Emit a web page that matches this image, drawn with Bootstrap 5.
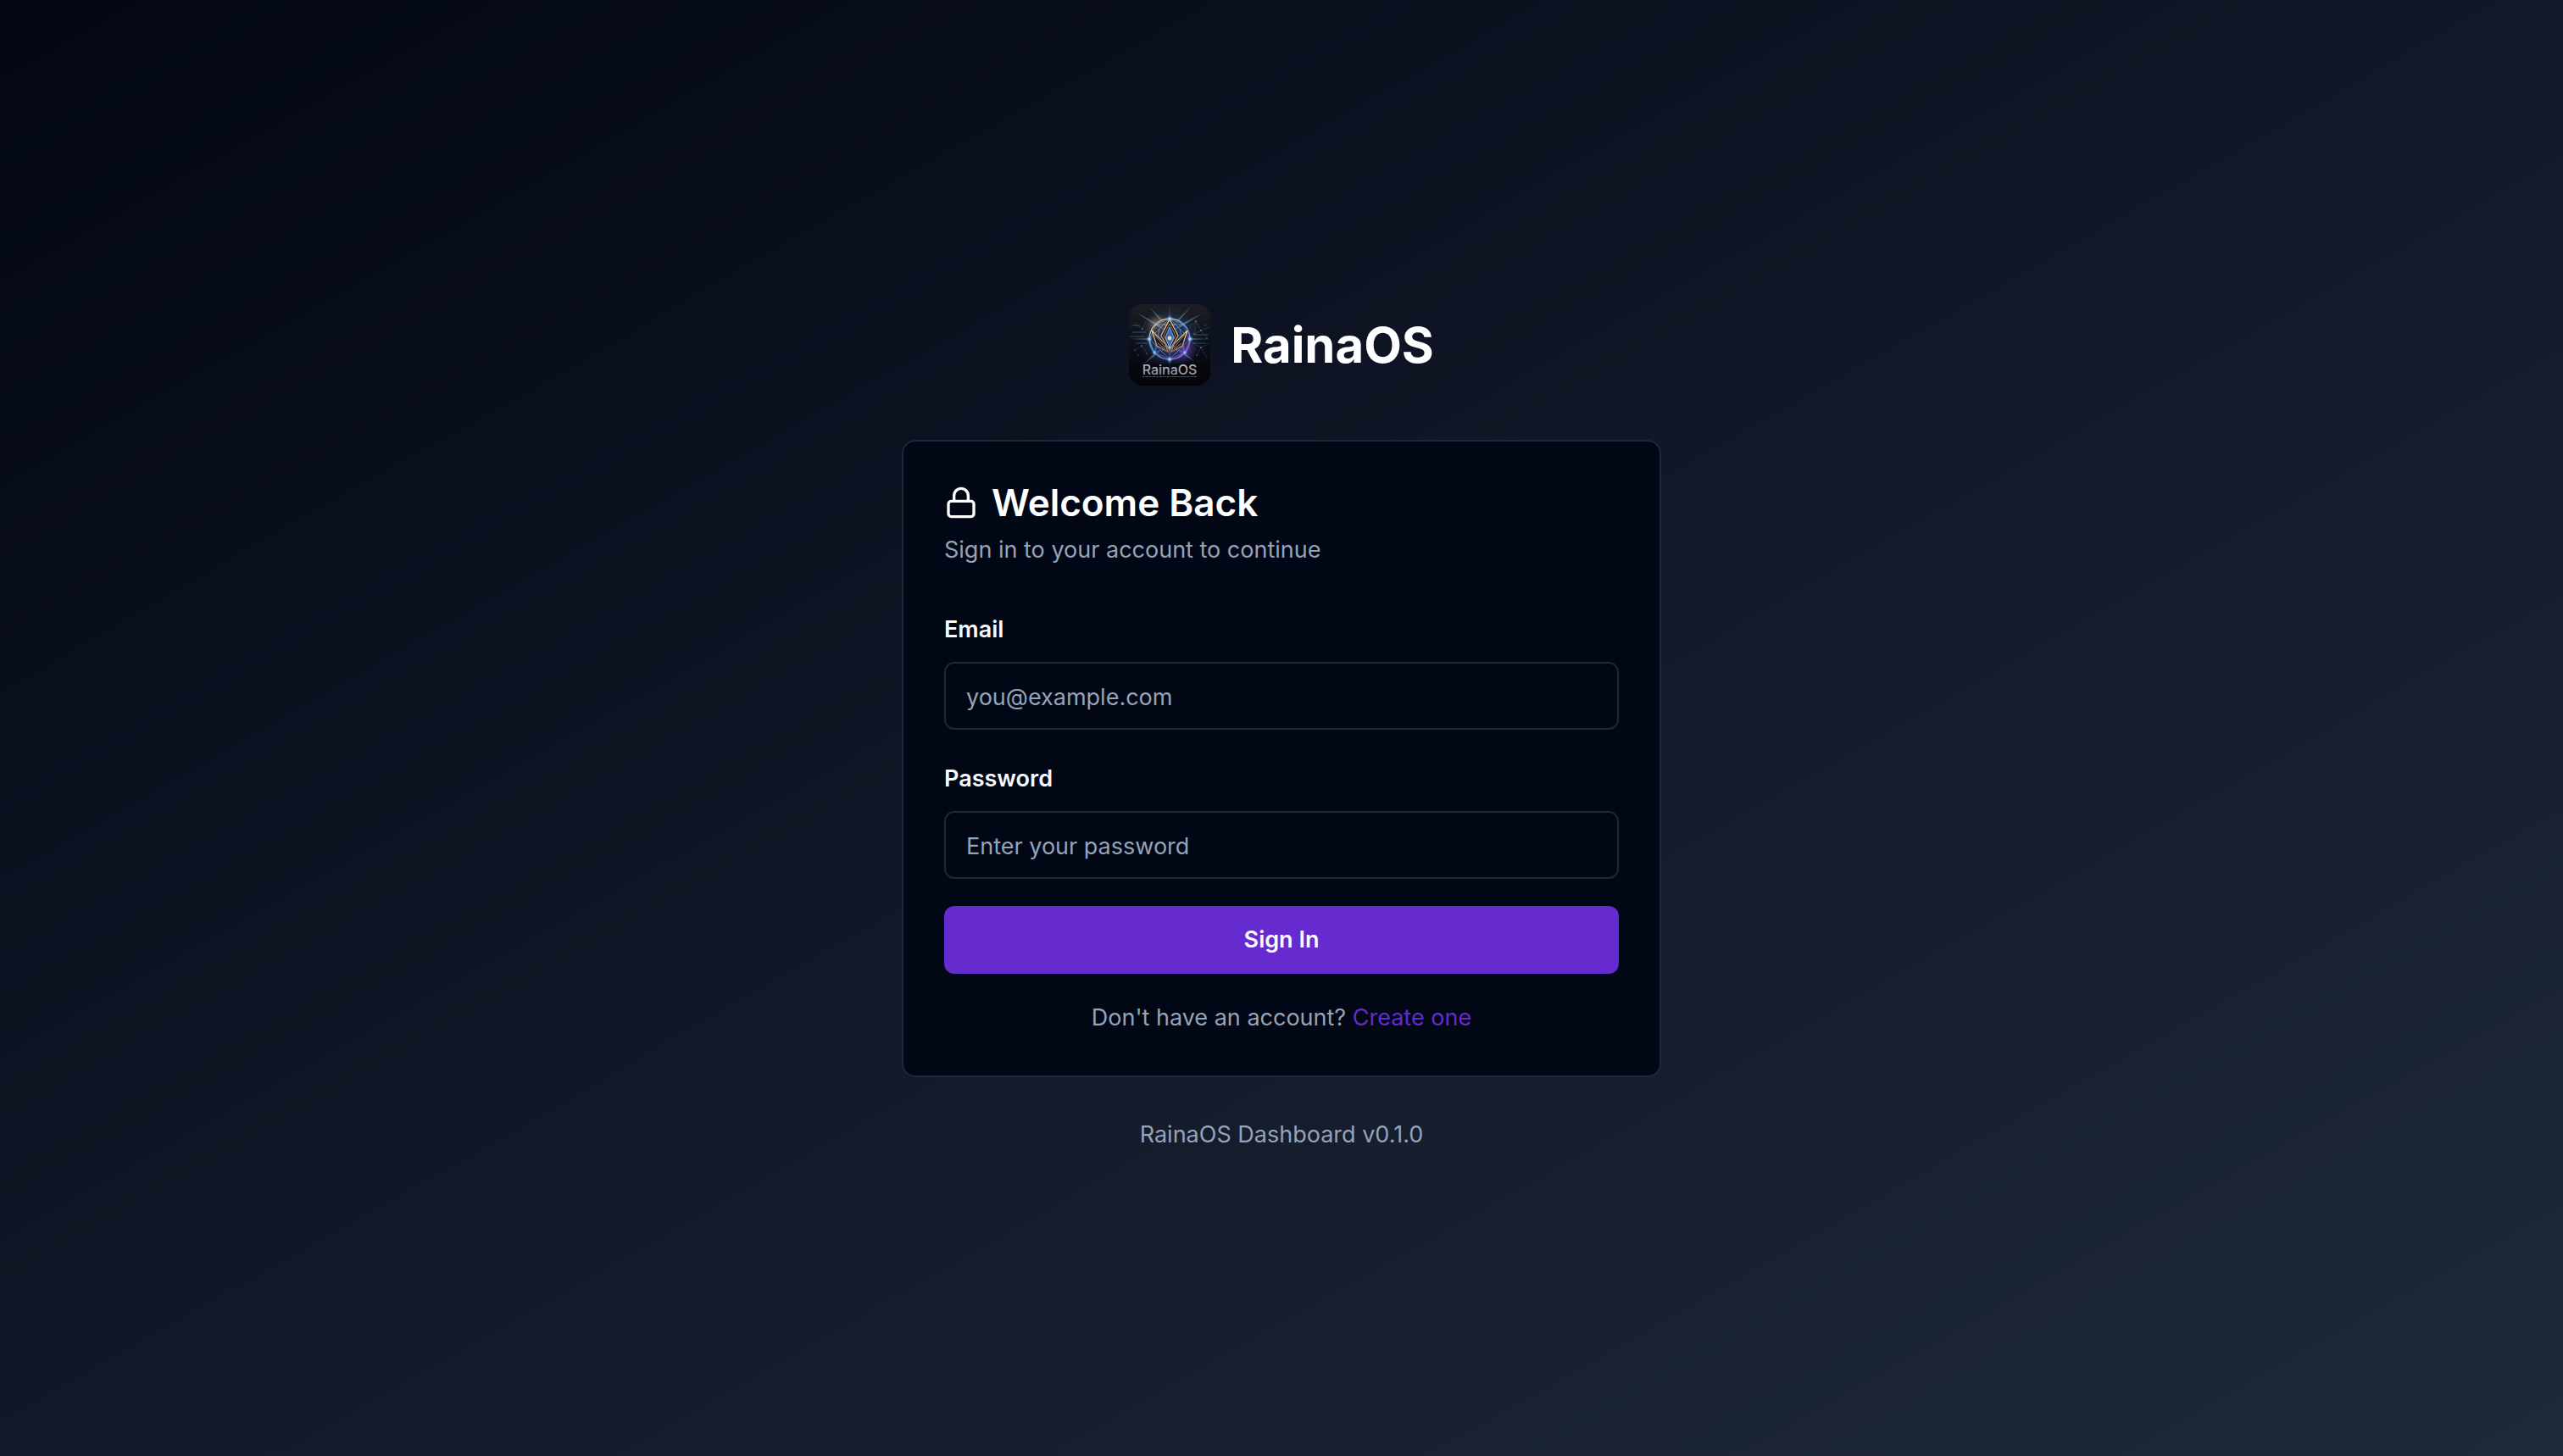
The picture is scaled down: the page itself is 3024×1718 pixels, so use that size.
<!DOCTYPE html>
<html lang="en" data-bs-theme="dark">
<head>
<meta charset="utf-8">
<meta name="viewport" content="width=device-width, initial-scale=1">
<title>RainaOS</title>
<link href="https://cdn.jsdelivr.net/npm/bootstrap@5.3.0/dist/css/bootstrap.min.css" rel="stylesheet">
<style>
  :root { --surface: #010714; --line: #1f2738; --ink: #f9fafc; --muted: #96a3b8; --brand: #652bcf; }
  body { font-family: Inter, "Liberation Sans", sans-serif; font-size: 27px; line-height: 40px; color: var(--ink);
    background: linear-gradient(to bottom right, #020615, #121827 50%, #1f293a) no-repeat; }
  .auth-column { width: 100%; max-width: 896px; }
  .brand-row { gap: 24px; margin-bottom: 64px; }
  .brand-logo { width: 96px; height: 96px; border-radius: 16px; }
  .brand-name { font-size: 58px; line-height: 72px; font-weight: 700; }
  .auth-card { --bs-card-bg: var(--surface); --bs-card-border-color: var(--line); --bs-card-color: var(--ink);
    border-width: 2px; border-radius: 16px; }
  .auth-card .card-body { padding: 48px; }
  .auth-head { margin-bottom: 48px; }
  .auth-title { gap: 16px; font-size: 44px; line-height: 48px; font-weight: 600; margin-bottom: 12px; }
  .auth-form { gap: 32px; }
  .form-label { font-size: 27px; line-height: 52px; font-weight: 600; margin-bottom: 12px; display: block; }
  .form-control { height: 80px; padding: 2px 24px 0; font-size: 27px; line-height: 40px; border: 2px solid var(--line);
    border-radius: 12px; background: var(--surface); color: var(--ink); }
  .form-control:focus { background: var(--surface); border-color: var(--brand); box-shadow: none; }
  .form-control::placeholder { color: var(--muted); opacity: 1; }
  .btn-brand { --bs-btn-bg: var(--brand); --bs-btn-color: var(--ink); --bs-btn-hover-bg: #5824b8; --bs-btn-hover-color: #fff;
    height: 80px; border: 0; border-radius: 12px; font-size: 27px; font-weight: 600; }
  .text-dim { color: var(--muted); }
  .link-brand { color: var(--brand); }
  .version { margin-top: 48px; }
</style>
<script src="https://cdn.jsdelivr.net/npm/bootstrap@5.3.0/dist/js/bootstrap.bundle.min.js"></script>
</head>
<body>
<main class="min-vh-100 d-flex align-items-center justify-content-center">
  <div class="auth-column">
    <header class="brand-row d-flex align-items-center justify-content-center">
      <svg class="brand-logo" viewBox="0 0 96 96" role="img" aria-label="RainaOS logo">
        <defs>
          <linearGradient id="sky" x1="0" y1="0" x2="0" y2="1"><stop offset="0" stop-color="#1d1e22"/><stop offset=".45" stop-color="#0c101b"/><stop offset="1" stop-color="#030408"/></linearGradient>
          <radialGradient id="halo"><stop offset="0" stop-color="#86b8ee" stop-opacity=".8"/><stop offset=".55" stop-color="#3d5f90" stop-opacity=".6"/><stop offset="1" stop-color="#14203a" stop-opacity="0"/></radialGradient>
          <radialGradient id="violet"><stop offset="0" stop-color="#8c48d8" stop-opacity=".8"/><stop offset="1" stop-color="#4a2a90" stop-opacity="0"/></radialGradient>
          <radialGradient id="amber"><stop offset="0" stop-color="#c99a62" stop-opacity=".7"/><stop offset="1" stop-color="#6a4a28" stop-opacity="0"/></radialGradient>
          <radialGradient id="spark"><stop offset="0" stop-color="#fff"/><stop offset=".3" stop-color="#8fc8ff" stop-opacity=".8"/><stop offset="1" stop-color="#4a8be0" stop-opacity="0"/></radialGradient>
          <linearGradient id="rim" gradientUnits="userSpaceOnUse" x1="32" y1="18" x2="62" y2="64"><stop offset="0" stop-color="#e5bd83"/><stop offset=".4" stop-color="#6cabdc"/><stop offset=".6" stop-color="#6482e0"/><stop offset="1" stop-color="#a868ee"/></linearGradient>
          <linearGradient id="gold" x1="0" y1="0" x2="0" y2="1"><stop offset="0" stop-color="#f4d49a"/><stop offset="1" stop-color="#a5794a"/></linearGradient>
          <linearGradient id="steel" x1="0" y1="0" x2="0" y2="1"><stop offset="0" stop-color="#d0d3dc"/><stop offset="1" stop-color="#777b90"/></linearGradient>
        </defs>
        <rect width="96" height="96" fill="url(#sky)"/>
        <circle cx="48" cy="40" r="40" fill="url(#halo)" opacity=".65"/>
        <ellipse cx="34" cy="24" rx="16" ry="14" fill="url(#amber)"/>
        <ellipse cx="63" cy="53" rx="18" ry="17" fill="url(#violet)"/>
        <g fill="#74b4cc" opacity=".45"><path d="M47 30 48 0l1 30zM44 28 24 3l23 23zM49 26 73 3 52 28zM36 28 9 10l29 15zM58 25 86 11 60 28zM34 54 18 70l18-13zM60 57l17 10-15-13zM47 62l1 15 1-15zM26 40 0 41l26 1zM70 40l26 1-26 1z"/></g>
        <g stroke="#8ebfdf" opacity=".55" stroke-width=".6"><path d="M4 33H20M8 46H22M1 38H18M76 36H94M75 46H91M3 25H13"/></g>
        <g fill="none" stroke="#63758e" stroke-width=".4" opacity=".7"><path d="m71 27 8-7 6 11 10-4M79 20l-2 15 8-4 7 9M74 45l11 6 10-5M80 60l5-9 7 12M7 54l8-5 6 9M5 22l11 7 4-9"/></g>
        <g fill="#91b4d0"><circle cx="79" cy="20" r=".7"/><circle cx="85" cy="31" r=".7"/><circle cx="77" cy="35" r=".6"/><circle cx="92" cy="40" r=".6"/><circle cx="85" cy="51" r=".7"/><circle cx="80" cy="60" r=".6"/><circle cx="7" cy="54" r=".6"/><circle cx="15" cy="49" r=".7"/><circle cx="16" cy="29" r=".7"/><circle cx="21" cy="58" r=".6"/><circle cx="11" cy="60" r=".5"/><circle cx="90" cy="25" r=".6"/></g>
        <circle cx="48" cy="41" r="24" fill="#16264a" fill-opacity=".45" stroke="url(#rim)" stroke-width="1.4"/>
        <g fill="none" stroke="url(#rim)" stroke-width=".7" opacity=".9"><path d="M48 17 32 24 24 41l6 16 18 8 18-8 6-16-8-17zM32 24l16 9 16-9M24 41l12-12 12-12 12 12 12 12M30 57l6-12 12 6 12-6 6 12M30 57l18-6 18 6M24 41l24 24 24-24M36 29 30 57M60 29l6 28M32 24h32M48 51v14"/></g>
        <g fill="#17172b" stroke="url(#gold)" stroke-width="1.3"><path d="m27 31 16 16 3 9-13-7z"/><path d="M69 31 53 47l-3 9 13-7z"/><path d="m48 18 10 19-10 17-10-17z"/></g>
        <path d="m30 36 13 15m-9-5 9 7M66 36 53 51m9-5-9 7M48 23l7 14-7 13-7-13z" fill="none" stroke="#cba067" stroke-width=".8"/>
        <path d="m48 27 5 12-5 12-5-12z" fill="#396cae" stroke="#85bdf2" stroke-width=".8"/>
        <circle cx="48" cy="40" r="2.4" fill="#ffd0a0"/>
        <g fill="url(#spark)"><circle cx="24" cy="41" r="4"/><circle cx="72" cy="41" r="4"/><circle cx="48" cy="17" r="4"/><circle cx="48" cy="65" r="4"/><circle cx="30" cy="57" r="3"/><circle cx="66" cy="57" r="3"/><circle cx="32" cy="24" r="2"/><circle cx="48" cy="51" r="3"/></g>
        <rect y="70" width="96" height="18" fill="#030509" opacity=".5"/>
        <text x="48" y="83" text-anchor="middle" font-family="Inter, sans-serif" font-size="16" font-weight="500" fill="url(#steel)">RainaOS</text>
        <path d="M16 85.5H80" stroke="#555968" stroke-width="1" stroke-dasharray="2 .6 1 .5 3 1"/>
      </svg>
      <h1 class="brand-name mb-0">RainaOS</h1>
    </header>

    <section class="card auth-card">
      <div class="card-body">
        <div class="auth-head">
          <h2 class="auth-title d-flex align-items-center">
            <svg width="40" height="40" viewBox="0 0 24 24" fill="none" stroke="currentColor" stroke-width="2" stroke-linecap="round" stroke-linejoin="round" aria-hidden="true"><rect width="18" height="11" x="3" y="11" rx="2"/><path d="M7 11V7a5 5 0 0 1 10 0v4"/></svg>
            Welcome Back
          </h2>
          <p class="text-dim mb-0">Sign in to your account to continue</p>
        </div>
        <form class="auth-form d-flex flex-column">
          <div>
            <label class="form-label" for="email">Email</label>
            <input class="form-control" id="email" type="email" placeholder="you@example.com">
          </div>
          <div>
            <label class="form-label" for="password">Password</label>
            <input class="form-control" id="password" type="password" placeholder="Enter your password">
          </div>
          <button class="btn btn-brand w-100" type="submit">Sign In</button>
          <p class="text-dim text-center mb-0">Don't have an account? <a class="link-brand text-decoration-none" href="#">Create one</a></p>
        </form>
      </div>
    </section>
    <p class="version text-dim text-center mb-0">RainaOS Dashboard v0.1.0</p>
  </div>
</main>
</body>
</html>
